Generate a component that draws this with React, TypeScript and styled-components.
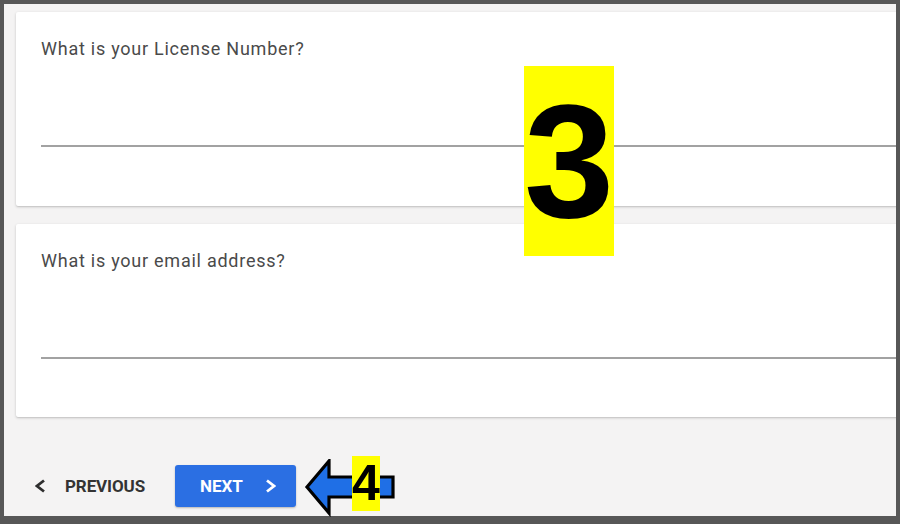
import styled, { createGlobalStyle } from 'styled-components';

const GlobalStyle = createGlobalStyle`
  html, body {
    margin: 0;
    padding: 0;
    width: 900px;
    height: 524px;
    overflow: hidden;
  }
  body {
    font-family: Roboto, "Liberation Sans", Arial, sans-serif;
  }
`;

const questions = ['What is your License Number?', 'What is your email address?'];

export default function App() {
  return (
    <>
      <GlobalStyle />
      <Frame>
        <Screen>
          {questions.map((q, i) => (
            <QuestionCard key={q} $first={i === 0}>
              <QuestionLabel>{q}</QuestionLabel>
              <AnswerLine />
            </QuestionCard>
          ))}
          <Footer>
            <PrevButton>
              <Chevron dir="left" color="#2e2e2e" />
              <span>PREVIOUS</span>
            </PrevButton>
            <NextButton>
              <span>NEXT</span>
              <Chevron dir="right" color="#ffffff" />
            </NextButton>
          </Footer>
        </Screen>

        <StepBadge $x={524} $y={66} $w={90} $h={190} $size={162}>3</StepBadge>
        <PointerArrow width="94" height="58" viewBox="0 0 94 58">
          <polygon
            points="3,28 25,2 25,18 89,18 89,38 25,38 25,54"
            fill="#1f6fe6"
            stroke="#000"
            strokeWidth="3.2"
            strokeLinejoin="miter"
          />
        </PointerArrow>
        <StepBadge $x={352} $y={456} $w={28} $h={55} $size={50}>4</StepBadge>
      </Frame>
    </>
  );
}

function Chevron({ dir, color }: { dir: 'left' | 'right'; color: string }) {
  const points = dir === 'right' ? '2,1.5 9,7 2,12.5' : '9,1.5 2,7 9,12.5';
  return (
    <svg width="11" height="14" viewBox="0 0 11 14">
      <polyline points={points} fill="none" stroke={color} strokeWidth="2.8" />
    </svg>
  );
}

const Frame = styled.div`
  position: relative;
  box-sizing: border-box;
  width: 900px;
  height: 524px;
  background: #575757;
  padding: 4px 4px 8px 4px;
  display: flex;
`;

const Screen = styled.div`
  flex: 1;
  display: flex;
  flex-direction: column;
  background: #f4f3f3;
  padding: 8px 0 0 12px;
  overflow: hidden;
`;

const QuestionCard = styled.div<{ $first: boolean }>`
  flex-shrink: 0;
  margin-top: ${({ $first }) => ($first ? 0 : 18)}px;
  margin-right: -12px;
  height: ${({ $first }) => ($first ? 194 : 193)}px;
  box-sizing: border-box;
  background: #ffffff;
  border-radius: 2px 0 0 2px;
  box-shadow: 0 1px 3px rgba(0, 0, 0, 0.18), 0 1px 1px rgba(0, 0, 0, 0.06);
  padding: 27px 0 0 25px;
  display: flex;
  flex-direction: column;
`;

const QuestionLabel = styled.div`
  font-size: 18px;
  letter-spacing: 0.75px;
  line-height: 20px;
  color: #4a4a4a;
`;

const AnswerLine = styled.div`
  margin-top: 86px;
  height: 2px;
  background: #a2a2a2;
`;

const Footer = styled.div`
  display: flex;
  align-items: center;
  padding: 48px 0 0 19px;
`;

const PrevButton = styled.button`
  display: flex;
  align-items: center;
  gap: 19px;
  background: none;
  border: none;
  padding: 0;
  font-family: Roboto, "Liberation Sans", Arial, sans-serif;
  font-weight: 700;
  font-size: 17px;
  letter-spacing: -0.1px;
  color: #333333;
  cursor: pointer;
`;

const NextButton = styled.button`
  margin-left: 30px;
  width: 121px;
  height: 42px;
  box-sizing: border-box;
  display: flex;
  align-items: center;
  justify-content: space-between;
  padding: 0 20px 0 25px;
  background: #2b6fe3;
  border: none;
  border-radius: 3px;
  box-shadow: 0 1px 2px rgba(0, 0, 0, 0.25);
  font-family: Roboto, "Liberation Sans", Arial, sans-serif;
  font-weight: 700;
  font-size: 17px;
  letter-spacing: -0.1px;
  color: #ffffff;
  cursor: pointer;
`;

const StepBadge = styled.div<{ $x: number; $y: number; $w: number; $h: number; $size: number }>`
  position: absolute;
  left: ${({ $x }) => $x}px;
  top: ${({ $y }) => $y}px;
  width: ${({ $w }) => $w}px;
  height: ${({ $h }) => $h}px;
  background: #ffff00;
  color: #000000;
  font-family: "Liberation Sans", Arial, sans-serif;
  font-weight: 700;
  font-size: ${({ $size }) => $size}px;
  line-height: ${({ $h }) => $h}px;
  text-align: center;
  overflow: hidden;
`;

const PointerArrow = styled.svg`
  position: absolute;
  left: 304px;
  top: 459px;
`;
